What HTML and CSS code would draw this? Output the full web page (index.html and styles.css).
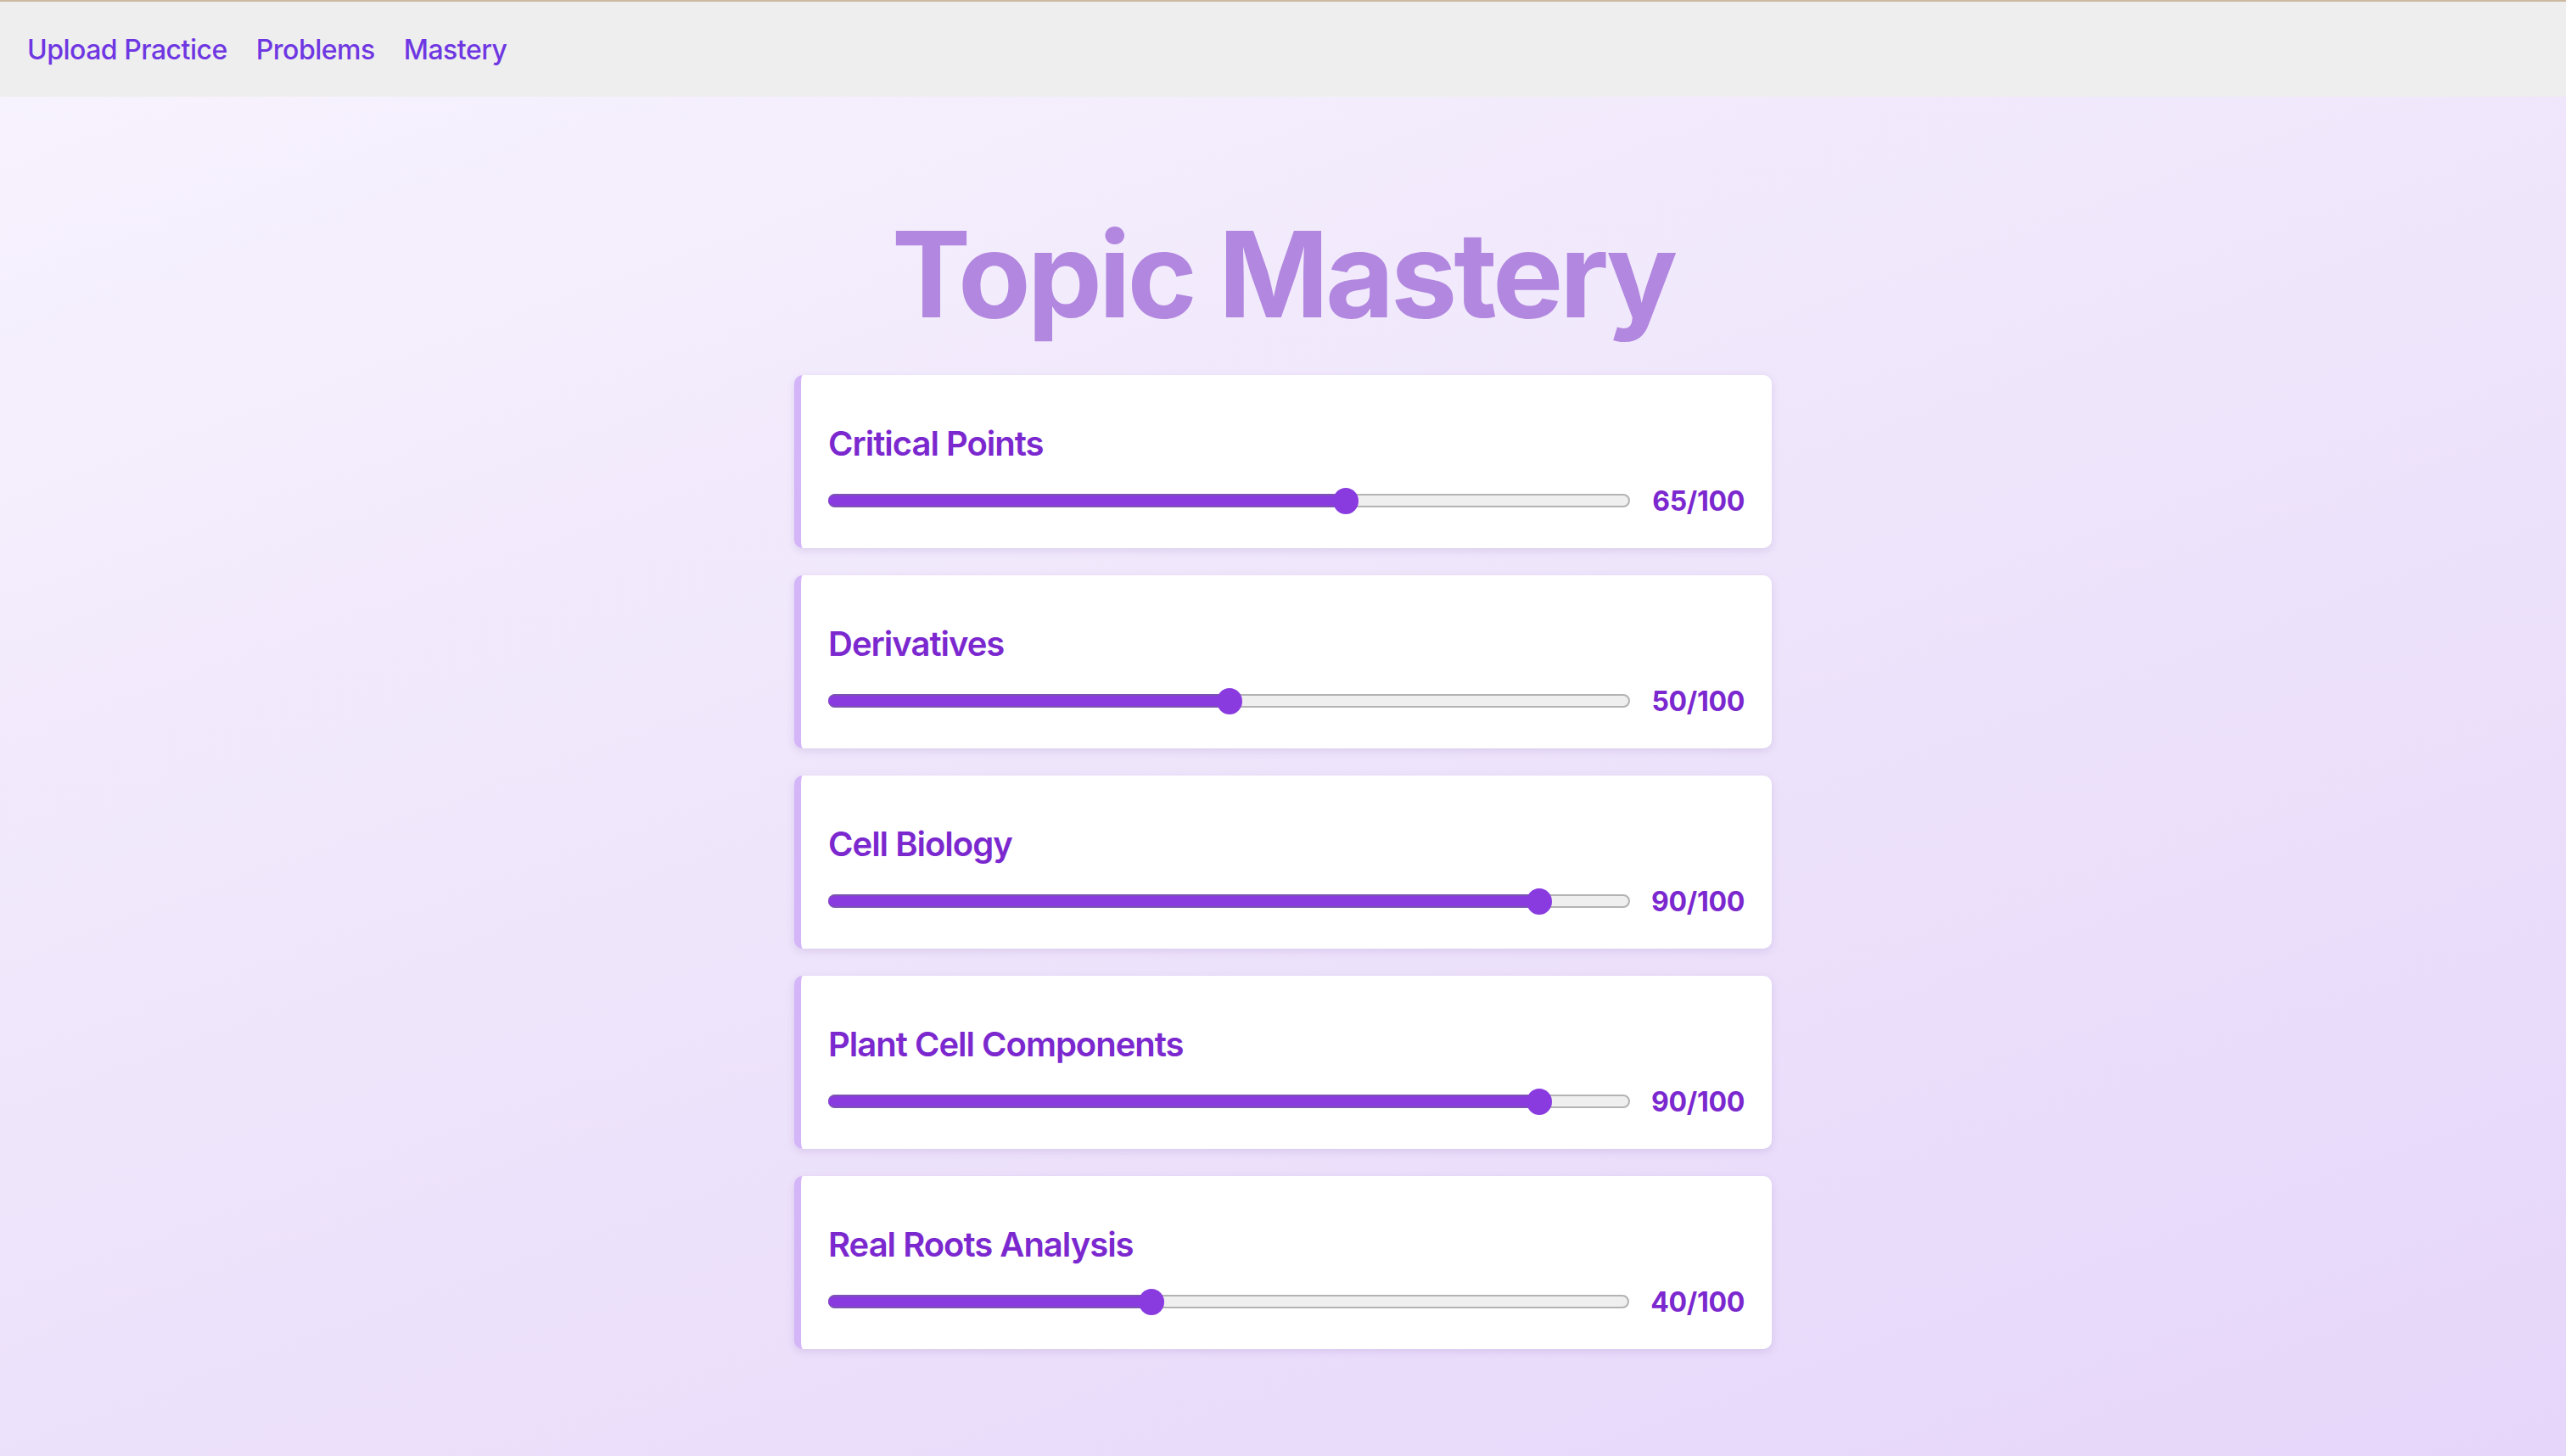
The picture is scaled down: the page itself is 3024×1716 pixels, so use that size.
FILE: index.html
```html
<!DOCTYPE html>
<html lang="en">
<head>
<meta charset="utf-8">
<title>Topic Mastery</title>
<link rel="stylesheet" href="styles.css">
</head>
<body>
<nav class="topnav">
  <a class="navlink" href="#">Upload Practice</a>
  <a class="navlink" href="#">Problems</a>
  <a class="navlink" href="#">Mastery</a>
</nav>
<main class="page">
  <h1 class="page-title">Topic Mastery</h1>
  <section class="topic-list">
    <div class="topic-card">
      <h3 class="topic-name">Critical Points</h3>
      <div class="slider-row">
        <div class="track" style="--v:0.65"><div class="fill"></div><div class="thumb"></div></div>
        <span class="score">65/100</span>
      </div>
    </div>
    <div class="topic-card">
      <h3 class="topic-name">Derivatives</h3>
      <div class="slider-row">
        <div class="track" style="--v:0.50"><div class="fill"></div><div class="thumb"></div></div>
        <span class="score">50/100</span>
      </div>
    </div>
    <div class="topic-card">
      <h3 class="topic-name">Cell Biology</h3>
      <div class="slider-row">
        <div class="track" style="--v:0.90"><div class="fill"></div><div class="thumb"></div></div>
        <span class="score">90/100</span>
      </div>
    </div>
    <div class="topic-card">
      <h3 class="topic-name">Plant Cell Components</h3>
      <div class="slider-row">
        <div class="track" style="--v:0.90"><div class="fill"></div><div class="thumb"></div></div>
        <span class="score">90/100</span>
      </div>
    </div>
    <div class="topic-card">
      <h3 class="topic-name">Real Roots Analysis</h3>
      <div class="slider-row">
        <div class="track" style="--v:0.40"><div class="fill"></div><div class="thumb"></div></div>
        <span class="score">40/100</span>
      </div>
    </div>
  </section>
</main>
</body>
</html>
```

FILE: styles.css
```css
* { box-sizing: border-box; }

html, body {
  margin: 0;
  padding: 0;
}

body {
  min-height: 1716px;
  font-family: Inter, "Noto Sans", "Liberation Sans", sans-serif;
  background: linear-gradient(160deg, #f8f4fe 0%, #efe6fb 45%, #e6d6fa 100%);
}

.topnav {
  height: 114px;
  border-top: 2px solid #cdb99f;
  background: #eeeeee;
  display: flex;
  align-items: center;
  gap: 34px;
  padding: 0 32px;
}

.navlink {
  font-size: 32px;
  font-weight: 500;
  color: #6f37e2;
  text-decoration: none;
  letter-spacing: -0.5px;
}

.page {
  padding-top: 123px;
  display: flex;
  flex-direction: column;
  align-items: center;
}

.page-title {
  margin: 0 0 32px;
  font-size: 140px;
  line-height: 173px;
  font-weight: 700;
  letter-spacing: -0.03em;
  color: #b287df;
}

.topic-list {
  width: 1152px;
  display: flex;
  flex-direction: column;
  gap: 32px;
}

.topic-card {
  background: #ffffff;
  border-left: 8px solid #d3b5f8;
  border-radius: 10px;
  box-shadow: 0 3px 10px rgba(120, 80, 170, 0.16);
  padding: 57px 32px 40px;
  height: 204px;
}

.topic-name {
  margin: 0 0 27px;
  font-size: 40px;
  line-height: 48px;
  font-weight: 600;
  letter-spacing: -1px;
  color: #7b28cf;
}

.slider-row {
  display: flex;
  align-items: center;
  gap: 25px;
  height: 32px;
}

.track {
  position: relative;
  flex: 1;
  height: 16px;
  border: 2px solid #b3b3b3;
  border-radius: 8px;
  background: #efefef;
}

.fill {
  position: absolute;
  left: -2px;
  top: -2px;
  bottom: -2px;
  width: calc(15px + var(--v) * (100% - 26px));
  background: #8a3be0;
  border-top: 2px solid #7b54b2;
  border-bottom: 2px solid #7b54b2;
  border-radius: 8px 0 0 8px;
}

.thumb {
  position: absolute;
  top: 50%;
  left: calc(-2px + var(--v) * (100% - 26px));
  width: 30px;
  height: 31px;
  margin-top: -15.5px;
  border-radius: 50%;
  background: #8a3be0;
}

.score {
  font-size: 32px;
  font-weight: 700;
  color: #7b28cf;
  letter-spacing: -0.3px;
  min-width: 110px;
  text-align: right;
}
```
